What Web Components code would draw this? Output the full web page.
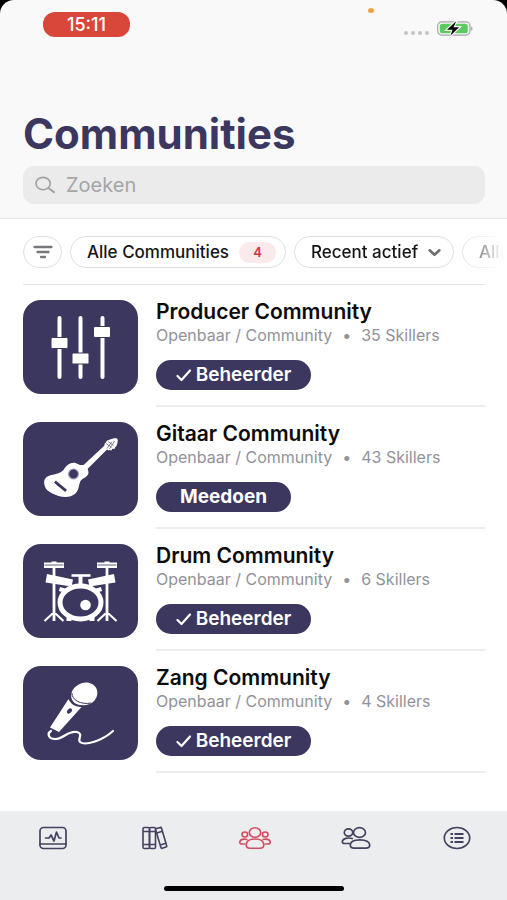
<!DOCTYPE html>
<html lang="nl">
<head>
<meta charset="utf-8">
<meta name="viewport" content="width=device-width, initial-scale=1">
<title>Communities</title>
<style>
html { height: 100%; background: #000; }
body { margin: 0; min-height: 100%; display: flex; font-family: Inter, "Liberation Sans", sans-serif; }
community-app { flex: 1; min-width: 0; }
</style>
</head>
<body>
<community-app></community-app>
<script>
const define = (name, html, setup) => {
  const template = document.createElement('template');
  template.innerHTML = '<style>*{box-sizing:border-box}</style>' + html;
  customElements.define(name, class extends HTMLElement {
    static observedAttributes = ['name'];
    constructor() {
      super();
      this.attachShadow({ mode: 'open' }).append(template.content.cloneNode(true));
    }
    connectedCallback() { if (setup) setup(this, this.shadowRoot); }
    attributeChangedCallback() { if (setup) setup(this, this.shadowRoot); }
  });
};

const icons = {
  search: ['0 0 22 18', '<ellipse cx="8.500" cy="7.500" rx="7.500" ry="6.500" fill="none" stroke="#a2a2a2" stroke-width="1.700"/><path d="M14 12.200 20.500 17" stroke="#a2a2a2" stroke-width="2"/>'],
  filter: ['0 0 20 14', '<path d="M1.500 2h17M4.500 7h11M8 12h4" stroke="#77777b" stroke-width="2.300" stroke-linecap="round"/>'],
  chevron: ['0 0 12 8', '<path d="M1.500 2 6 6l4.500-4" fill="none" stroke="#6d6d70" stroke-width="2.400" stroke-linecap="round" stroke-linejoin="round"/>'],
  check: ['0 0 16 14', '<path d="M1.500 8 5.500 12 14 2.500" fill="none" stroke="#fff" stroke-width="2.200" stroke-linecap="round" stroke-linejoin="round"/>'],
  battery: ['0 0 36 15', '<rect x=".7" y=".9" width="32.300" height="13.200" rx="4" fill="none" stroke="#a5a5a5" stroke-width="1.200"/><rect x="2.800" y="2.700" width="28" height="9.600" rx="2.500" fill="#5bca61"/><path d="M34.300 5.400c1.500.5 1.500 3.700 0 4.200z" fill="#929292"/><path d="m18.500.8-8.500 8h5.500l-2 5.700 8.700-8.200h-5.700l2.500-5.500z" fill="#000" stroke="#f9f9f9" stroke-width="2.400" paint-order="stroke"/>'],
  mixer: ['0 0 114 94', '<g fill="#fff"><rect x="34" y="16" width="4" height="63" rx="2"/><rect x="55" y="16" width="4" height="63" rx="2"/><rect x="77" y="16" width="4" height="63" rx="2"/><g stroke="#3b375e" stroke-width="1"><rect x="27.500" y="37.500" width="17" height="11" rx="1.500"/><rect x="48.500" y="53" width="17" height="11" rx="1.500"/><rect x="70" y="26.500" width="17" height="11" rx="1.500"/></g></g>'],
  guitar: ['0 0 114 94', '<g fill="#fff"><path d="M21 63c-1.500-6 2-9 7-10 5-1 9-2 12-5 3-5 7-8 12-7 3 1 4 2.500 7 2 3.500-.5 6 4 6 8-.5 4-6 5-8 8-2 4-1 8-5 12.500-7 6-17 3-23 0-4-2-7-4-8-8.500z"/><path d="m59 44 21.500-20 3.500 3-22 22z"/><path d="m80 25 2.500-5c2-2.500 9-4.500 11-3.500 1.500 1.500.5 7.500-2.500 9.500l-6 2.500z"/></g><circle cx="50" cy="52" r="5.600" fill="#a6a4b7"/><circle cx="50" cy="52" r="4.400" fill="#3b375e"/><path d="m32.500 60.500 9 7.500" stroke="#3b375e" stroke-width="2.800" stroke-linecap="square"/><g stroke="#3b375e" stroke-width=".6"><path d="m82 21 6 4.500M84 19l6 4.500M83.500 26.500l5-7M86 27l5-8"/></g><g fill="#fff"><circle cx="82" cy="22" r=".9"/><circle cx="84" cy="19.500" r=".9"/><circle cx="87.500" cy="27.500" r=".9"/><circle cx="90.500" cy="26" r=".9"/></g>'],
  drums: ['0 0 114 94', '<g stroke="#fff" fill="none"><path d="M30.500 18v59M83.500 18v59" stroke-width="2.800"/><path d="m21 77 7.500-7h4l7.500 7M74 77l7.500-7h4l7.500 7" stroke-width="2.200"/><path d="M57 31v11" stroke-width="4"/><path d="M48 31.500h19" stroke-width="2.600"/><path d="m36 45 13 4M78 45l-13 4" stroke-width="4"/></g><g fill="#fff"><path d="M20.500 18.500h20v5.500h-20zM73.500 18.500h20v5.500h-20zM28 17.500h5v2h-5zM81 17.500h5v2h-5z"/><path d="m23.500 30 26 5.500-1.500 7-26-4zM90.500 30l-26 5.500 1.500 7 26-4z"/><path d="M43 71h5v6h-5zM66 71h5v6h-5z"/></g><path d="M21 21h19M74 21h19" stroke="#3b375e" stroke-width=".8"/><ellipse cx="57" cy="58.500" rx="20.500" ry="16.500" fill="#3b375e" stroke="#fff" stroke-width="5"/><circle cx="62" cy="61" r="5.300" fill="#fff"/>'],
  mic: ['0 0 114 94', '<g fill="#fff"><path d="M48 27c2-7 11-12 18-10 8 2 10.500 11 5 17.500-4 5.500-15 6-20 2.500-3-3-4-6-3-10z"/><path d="M45 33c2 5 7 8 13 8L35.500 66l-9-4.500z"/></g><path d="M48.500 27c-.5 7 9 12 19.500 10M46.500 29.500c0 8 9 12.500 19 10.500" fill="none" stroke="#3b375e" stroke-width="1"/><ellipse cx="46" cy="45" rx="2" ry="3" transform="rotate(40 46 45)" fill="#3b375e"/><path d="M27.500 65c-4 2-3 8 4 8 9 0 13-9 22-7 7 2 0 7 3 10 5 4 22-1 33-11" fill="none" stroke="#fff" stroke-width="2.200" stroke-linecap="round"/>'],
  activity: ['0 0 30 24', '<g fill="none" stroke="currentColor" stroke-width="1.700" stroke-linejoin="round" stroke-linecap="round"><rect x="2" y="1.500" width="26" height="21" rx="3.500"/><path d="M2 18h26M7.500 12H11l2-3 3 6 2.500-9 2.500 6h2"/></g>'],
  books: ['0 0 30 24', '<g fill="none" stroke="currentColor" stroke-width="1.600" stroke-linejoin="round"><rect x="4" y="1.500" width="6.500" height="21" rx="1.300"/><rect x="10.500" y="1.500" width="6" height="21" rx="1.300"/><path d="m17.500 2.600 3.700-1.200q1-.2 1.300.8l5.200 17.600q.2 1-.8 1.300l-3.700 1.200q-1 .2-1.300-.8L16.700 3.900q-.2-1 .8-1.300z"/><path d="M4 5.500h12.500M4 18.500h12.500M17.700 7l5.800-1.700M21.200 19l5.800-1.700"/></g>'],
  group: ['1 0 32 24', '<g fill="none" stroke="currentColor" stroke-width="1.600"><ellipse cx="17" cy="6.500" rx="5.700" ry="4.800"/><ellipse cx="6.800" cy="8.500" rx="2.800" ry="2.500"/><ellipse cx="27.200" cy="8.500" rx="2.800" ry="2.500"/><path d="M17 13c-6 0-8.800 2.600-8.800 6 0 2.200 1.500 3.200 3.800 3.200h10c2.300 0 3.800-1 3.800-3.200 0-3.400-2.800-6-8.800-6z"/><path d="M7.500 18H4c-1.700 0-2.500-1-2.200-2.300.6-2 3.200-3.200 7.700-2.200M26.500 18H30c1.700 0 2.500-1 2.200-2.300-.6-2-3.200-3.200-7.700-2.200"/></g>'],
  people: ['0 0 30 24', '<g fill="none" stroke="currentColor" stroke-width="1.700"><ellipse cx="18.500" cy="6.500" rx="6" ry="4.900"/><ellipse cx="7.500" cy="6.500" rx="4.200" ry="3.600"/><path d="M19 13.800c-6 0-9.700 2-9.700 5.300 0 2 1.500 3.100 3.800 3.100h11.800c2.300 0 3.800-1.100 3.800-3.100 0-3.300-3.700-5.300-9.700-5.300z"/><path d="M9 17.500H3.500C2 17.500 1 16.500 1.300 15.200c.7-2.500 5-4.200 10.700-2.500"/></g>'],
  menu: ['0 0 30 24', '<ellipse cx="15" cy="12" rx="12.700" ry="10.500" fill="none" stroke="currentColor" stroke-width="1.700"/><path d="M12.500 8h9M12.500 12h9M12.500 16h9" stroke="currentColor" stroke-width="1.900"/><path d="M8.500 8h2.500M8.500 12h2.500M8.500 16h2.500" stroke="currentColor" stroke-width="1.900"/>']
};

define('ui-icon', '<style>:host{display:block}svg{display:block;width:100%;height:100%}</style><svg aria-hidden="true"></svg>', (host, root) => {
  const icon = icons[host.getAttribute('name')];
  if (!icon) return;
  const svg = root.querySelector('svg');
  svg.setAttribute('viewBox', icon[0]);
  svg.innerHTML = icon[1];
});

define('status-bar', `<style>
:host { display: flex; align-items: flex-start; justify-content: space-between; height: 100px; padding: 0 34px 0 43px; }
time { margin-top: 12px; width: 87px; border-radius: 12px; background: #d8473a; color: #fff; font: 500 18px/25px Inter, sans-serif; text-align: center; }
.mic { width: 6px; height: 5px; border-radius: 50%; background: #eba445; margin: 8px 0 0 208px; }
.right { display: flex; gap: 8px; margin-top: 21px; }
.signal { display: flex; gap: 3px; margin-top: 10px; }
.signal i { width: 4px; height: 4px; border-radius: 50%; background: #c4c4c6; }
ui-icon { width: 36px; height: 15px; }
</style><time>15:11</time><span class="mic"></span><div class="right"><span class="signal"><i></i><i></i><i></i><i></i></span><ui-icon name="battery"></ui-icon></div>`);

define('search-field', `<style>
:host { display: block; }
label { display: flex; align-items: center; gap: 10px; height: 38px; padding: 0 12px; border-radius: 11px; background: #ebebeb; }
ui-icon { width: 21px; height: 18px; }
input { flex: 1; min-width: 0; border: 0; padding: 0; outline: 0; background: none; font: 400 20px/24px Inter, sans-serif; color: #3b375e; }
input::placeholder { color: #a5a5a5; opacity: 1; }
</style><label><ui-icon name="search"></ui-icon><input type="text" placeholder="Zoeken" aria-label="Zoeken"></label>`);

define('page-header', `<style>
:host { display: block; background: #f9f9f9; border-bottom: 1px solid #e7e7e7; border-radius: 14px 14px 0 0; padding-bottom: 14px; }
h1 { margin: 0; padding: 10px 23px 8px; color: #3b375e; font: 700 42px/48px Inter, sans-serif; }
search-field { margin: 0 22px 0 23px; }
</style><status-bar></status-bar><h1><slot></slot></h1><search-field></search-field>`);

define('filter-bar', `<style>
:host { display: flex; gap: 8px; overflow: hidden; padding: 17px 0 16px 23px; mask-image: linear-gradient(90deg, #000 calc(100% - 52px), transparent calc(100% - 4px)); }
button, select { flex: none; height: 32px; border: 1px solid #dfdfe1; border-radius: 16px; background: #fff; color: #151517; font: 500 17px/20px Inter, sans-serif; }
.icon { display: grid; place-items: center; width: 39px; padding: 0; }
.icon ui-icon { width: 20px; height: 14px; }
.all { display: flex; align-items: center; justify-content: space-between; width: 216px; padding: 0 9px 0 16px; }
.count { width: 37px; border-radius: 11px; background: #faeaec; color: #cf3547; font: 600 13px/21px Inter, sans-serif; text-align: center; }
label { flex: none; display: grid; align-items: center; width: 160px; }
select { grid-area: 1 / 1; width: 100%; appearance: none; padding: 0 28px 0 16px; margin: 0; }
label ui-icon { grid-area: 1 / 1; justify-self: end; width: 13px; height: 9px; margin-right: 13px; pointer-events: none; }
</style>
<button class="icon" aria-label="Filters"><ui-icon name="filter"></ui-icon></button>
<button class="all">Alle Communities <span class="count">4</span></button>
<label><select aria-label="Sortering"><option>Recent actief</option></select><ui-icon name="chevron"></ui-icon></label>
<label><select aria-label="Categorie"><option>Alle</option></select><ui-icon name="chevron"></ui-icon></label>`);

define('community-item', `<style>
:host { display: flex; gap: 18px; height: 122px; }
.thumb { flex: none; width: 115px; height: 94px; margin-top: 15px; border-radius: 18px; background: #3b375e; }
.body { flex: 1; min-width: 0; padding-top: 14px; border-bottom: 2px solid #ededef; }
h2 { margin: 0; color: #0c0c0d; font: 600 21px/25px Inter, sans-serif; }
p { margin: 0; display: flex; gap: 10px; color: #929299; font: 400 16px/22px Inter, sans-serif; }
button { display: flex; align-items: center; justify-content: center; gap: 4px; height: 30px; width: 155px; margin-top: 14px; padding: 0; border: 0; border-radius: 15px; background: #3b375e; color: #fff; font: 600 19px/24px Inter, sans-serif; }
button ui-icon { width: 16px; height: 14px; }
button.join { width: 135px; font-weight: 700; }
.join ui-icon { display: none; }
</style>
<ui-icon class="thumb"></ui-icon>
<div class="body"><h2><slot></slot></h2><p><span>Openbaar / Community</span><span>•</span><span class="members"></span></p>
<button><ui-icon name="check"></ui-icon><span class="action"></span></button></div>`, (host, root) => {
  root.querySelector('.members').textContent = host.getAttribute('members') + ' Skillers';
  const joined = host.hasAttribute('admin');
  root.querySelector('.action').textContent = joined ? 'Beheerder' : 'Meedoen';
  root.querySelector('button').classList.toggle('join', !joined);
  root.querySelector('.thumb').setAttribute('name', host.getAttribute('picture'));
});

define('tab-item', `<style>
:host { flex: 1; display: block; color: #45415f; }
:host([current]) { color: #d44c60; }
a { display: flex; justify-content: center; padding: 15px 0; color: inherit; }
ui-icon { width: 32px; height: 24px; }
</style><a href="#"><ui-icon></ui-icon></a>`, (host, root) => {
  const link = root.querySelector('a');
  link.setAttribute('aria-label', host.getAttribute('label'));
  if (host.hasAttribute('current')) link.setAttribute('aria-current', 'page');
  root.querySelector('ui-icon').setAttribute('name', host.getAttribute('icon'));
});

define('tab-bar', `<style>
:host { display: flex; flex-direction: column; justify-content: space-between; height: 89px; background: #ecedef; padding-bottom: 9px; }
nav { display: flex; padding-left: 2px; }
.home { align-self: center; width: 180px; height: 5px; border-radius: 3px; background: #000; }
</style><nav><slot></slot></nav><span class="home"></span>`);

define('community-app', `<style>
:host { display: flex; flex-direction: column; }
main { flex: 1; background: #fff; }
.list { margin: 0 22px 0 23px; border-top: 1px solid #e2e2e4; }
</style>
<page-header>Communities</page-header>
<main><filter-bar></filter-bar>
<div class="list">
<community-item picture="mixer" members="35" admin>Producer Community</community-item>
<community-item picture="guitar" members="43">Gitaar Community</community-item>
<community-item picture="drums" members="6" admin>Drum Community</community-item>
<community-item picture="mic" members="4" admin>Zang Community</community-item>
</div></main>
<tab-bar>
<tab-item icon="activity" label="Activiteit"></tab-item>
<tab-item icon="books" label="Bibliotheek"></tab-item>
<tab-item icon="group" label="Communities" current></tab-item>
<tab-item icon="people" label="Vrienden"></tab-item>
<tab-item icon="menu" label="Menu"></tab-item>
</tab-bar>`);
</script>
</body>
</html>
